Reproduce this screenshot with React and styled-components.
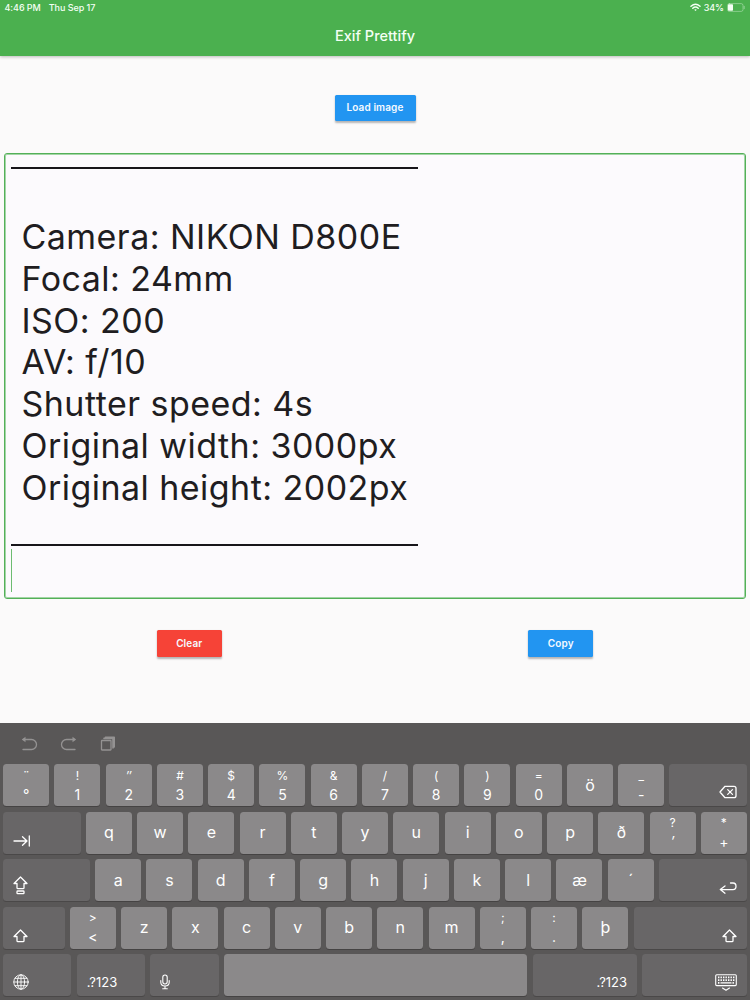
import React from "react";
import styled, { createGlobalStyle } from "styled-components";

const GlobalStyle = createGlobalStyle`
  * {
    box-sizing: border-box;
  }

  body {
    margin: 0;
    background: #fbfafa;
    font-family: Inter, "Liberation Sans", sans-serif;
  }
`;

const Screen = styled.div`
  display: flex;
  flex-direction: column;
  width: 750px;
  height: 1000px;
  overflow: hidden;
  background: #fbfafa;
`;

const Header = styled.header`
  flex: none;
  height: 56px;
  background: #4bb04f;
  color: #f4fff4;
  box-shadow: 0 1px 3px rgba(0, 0, 0, 0.25);
`;

const StatusBar = styled.div`
  display: flex;
  align-items: center;
  height: 15px;
  padding: 0 5px 0 4.5px;
  font-size: 9px;
  font-weight: 500;
  letter-spacing: -0.05px;
`;

const StatusDate = styled.span`
  margin-left: 8px;
`;

const StatusRight = styled.div`
  display: flex;
  align-items: center;
  gap: 3px;
  margin-left: auto;
`;

const AppTitle = styled.h1`
  margin: 0;
  font-size: 14.5px;
  line-height: 41px;
  font-weight: 500;
  letter-spacing: 0;
  text-align: center;
`;

const LoadRow = styled.div`
  display: flex;
  justify-content: center;
  padding: 38.5px 0 32px;
`;

const Button = styled.button`
  width: ${props => props.$width}px;
  height: 26.5px;
  padding: 0 0 1px;
  border: none;
  border-radius: 1.5px;
  background: ${props => props.$color};
  color: #f5faff;
  font-family: inherit;
  font-size: 10px;
  font-weight: 600;
  letter-spacing: 0.1px;
  box-shadow: 0 1.5px 2px rgba(0, 0, 0, 0.28);
`;

const Field = styled.div`
  flex: none;
  height: 446px;
  margin: 0 4px;
  padding: 13px 6px 0;
  border: 1px solid #53b058;
  border-radius: 3px;
  background: #fcfafd;
  box-shadow: inset 0 0 0 1px rgba(76, 175, 80, 0.5);
  color: #1f1d21;
`;

const Rule = styled.div`
  width: 407px;
  height: 2px;
  background: #17151a;
`;

const Lines = styled.div`
  padding: 47px 0 35.5px 10.5px;
  font-size: 34px;
  line-height: 41.75px;
  letter-spacing: 0.46px;
  white-space: nowrap;
`;

const Caret = styled.div`
  width: 1px;
  height: 43px;
  margin-top: 3px;
  background: #6dbb71;
`;

const Actions = styled.div`
  display: grid;
  grid-template-columns: 371.5px 371.5px;
  justify-items: center;
  padding: 31px 0 0 3.5px;
  flex: 1;
`;

const Keyboard = styled.div`
  flex: none;
  height: 277px;
  background: #595757;
  color: #fff;
`;

const Tools = styled.div`
  display: flex;
  align-items: center;
  gap: 22px;
  height: 41px;
  padding-left: 20px;
  color: #949292;
`;

const KeyRow = styled.div`
  display: flex;
  gap: 5.25px;
  height: 42px;
  margin-bottom: 5.6px;
  padding: 0 3.2px;
`;

const Key = styled.div`
  display: flex;
  flex: none;
  flex-direction: column;
  align-items: center;
  justify-content: center;
  width: ${props => props.$width || 46}px;
  border-radius: 3.5px;
  background: #8b898a;
  box-shadow: 0 1px 0.5px #454343;
  font-size: 16px;
  line-height: 19px;
`;

const Upper = styled.span`
  font-size: 12px;
  line-height: 18px;
  font-style: ${props => (props.$slanted ? "italic" : "normal")};
`;

const Lower = styled.span`
  font-size: 14px;
  line-height: 19px;
  font-style: ${props => (props.$slanted ? "italic" : "normal")};
`;

const DarkKey = styled.div`
  display: flex;
  flex: ${props => (props.$width ? "none" : 1)};
  align-items: flex-end;
  justify-content: ${props => (props.$right ? "flex-end" : "flex-start")};
  width: ${props => props.$width}px;
  padding: 0 10px 5px;
  border-radius: 3.5px;
  background: #686667;
  box-shadow: 0 1px 0.5px #4a4848;
  font-size: 13px;
  line-height: 18px;
`;

const Svg = styled.svg`
  display: block;
  fill: none;
  stroke: currentColor;
  stroke-width: ${props => props.$stroke || 1.3};
  stroke-linecap: round;
  stroke-linejoin: round;
`;

const WifiIcon = () => (
  <Svg width="11" height="9" viewBox="0 0 11 9" $stroke={1.5}>
    <path d="M1 3.2Q5.5-.8 10 3.2M2.8 5.2Q5.5 2.8 8.2 5.2" />
    <path d="M4.2 6.8Q5.5 5.8 6.8 6.8L5.5 8Z" fill="currentColor" stroke="none" />
  </Svg>
);

const BatteryIcon = () => (
  <Svg width="18" height="9" viewBox="0 0 18 9" $stroke={0.6}>
    <rect x=".5" y=".6" width="15.5" height="7.8" rx="1.8" opacity=".6" />
    <rect x="1" y="1.2" width="5" height="6.6" rx=".8" fill="currentColor" stroke="none" />
    <path d="M17.2 3.3v2.4" opacity=".7" />
  </Svg>
);

const UndoIcon = () => (
  <Svg width="18" height="16" viewBox="0 0 18 16">
    <path d="M3 3.5h8.5a4.9 4.9 0 0 1 0 10H3" />
    <path d="M5.5.8 1.8 3.5l3.7 2.7Z" fill="currentColor" stroke="none" />
  </Svg>
);

const RedoIcon = () => (
  <Svg width="18" height="16" viewBox="0 0 18 16">
    <path d="M14.5 3.5H6.5a4.9 4.9 0 0 0 0 10H15" />
    <path d="m12.5.8 3.7 2.7-3.7 2.7Z" fill="currentColor" stroke="none" />
  </Svg>
);

const PasteIcon = () => (
  <Svg width="16" height="16" viewBox="0 0 16 16">
    <rect x="1.5" y="4.5" width="9.5" height="9.5" rx=".5" />
    <path d="M4 2.4h9V12M5.5 1.3h8.7V11" strokeWidth="1.6" />
  </Svg>
);

const TabIcon = () => (
  <Svg width="18" height="15" viewBox="0 0 18 15">
    <path d="M1 7h13M9.5 2.8 14 7l-4.5 4.2M16.3 2v10" />
  </Svg>
);

const BackspaceIcon = () => (
  <Svg width="18" height="16" viewBox="0 0 18 16">
    <path d="M6 1.3h9q2 0 2 2v7.4q0 2-2 2H6L1 7Z" />
    <path d="m8.7 4.6 4.8 4.8m0-4.8L8.7 9.4" />
  </Svg>
);

const ReturnIcon = () => (
  <Svg width="18" height="14" viewBox="0 0 18 14">
    <path d="M11.5 1H14q3 0 3 3.3t-3 3.3H1.5M6 4 1.3 7.6 6 11.2" />
  </Svg>
);

const ShiftIcon = ({ lock }) => (
  <Svg width="15" height={lock ? 20 : 15} viewBox={`0 0 15 ${lock ? 20 : 15}`}>
    <path d="M7.5 1 1 7.5h3v4.2q0 1 1 1h5q1 0 1-1V7.5h3Z" />
    {lock && <rect x="4" y="15" width="7" height="2.6" rx=".7" />}
  </Svg>
);

const GlobeIcon = () => (
  <Svg width="16" height="17" viewBox="0 0 16 17" $stroke={0.9}>
    <circle cx="8" cy="8" r="7.2" />
    <ellipse cx="8" cy="8" rx="3.6" ry="7.2" />
    <path d="M8 .8v14.4M.8 8h14.4M2 4.3h12M2 11.7h12" />
  </Svg>
);

const MicIcon = () => (
  <Svg width="10" height="17" viewBox="0 0 10 17" $stroke={1.1}>
    <rect x="2.8" y="1" width="4.4" height="9" rx="2.2" />
    <path d="M.8 6.5v1.8Q.8 12 5 12t4.2-3.7V6.5M5 12v2.8M2.7 14.8h4.6" />
  </Svg>
);

const HideIcon = () => (
  <Svg width="22" height="17" viewBox="0 0 22 17" $stroke={1.1}>
    <rect x=".7" y=".8" width="20.6" height="10.8" rx="1" />
    <path
      d="M3 3.4h16.5M3 6.1h16.5M3 8.9h1.5M17.5 8.9h2"
      strokeDasharray="1.4 1.1"
      strokeLinecap="butt"
      strokeWidth="1.6"
    />
    <path d="M6 8.9h10" strokeWidth="1.4" />
    <path d="M7.5 14 11 16.2l3.5-2.2" />
  </Svg>
);

const exif = [
  "Camera: NIKON D800E",
  "Focal: 24mm",
  "ISO: 200",
  "AV: f/10",
  "Shutter speed: 4s",
  "Original width: 3000px",
  "Original height: 2002px"
];

// A pair is a key with an upper and a lower symbol
const numberKeys = [
  ["¨", "°"],
  ["!", "1"],
  ["″", "2"],
  ["#", "3"],
  ["$", "4"],
  ["%", "5"],
  ["&", "6"],
  ["/", "7"],
  ["(", "8"],
  [")", "9"],
  ["=", "0"],
  "ö",
  ["_", "-"]
];
const topKeys = [..."qwertyuiopð", ["?", "′"], ["*", "+"]];
const homeKeys = [..."asdfghjklæ", "´"];
const bottomKeys = [[">", "<"], ..."zxcvbnm", [";", ","], [":", "."], "þ"];

const renderKeys = keys =>
  keys.map((key, i) => (
    <Key key={i}>
      {Array.isArray(key) ? (
        <>
          <Upper $slanted={key[0] === "″"}>{key[0]}</Upper>
          <Lower $slanted={key[1] === "′"}>{key[1]}</Lower>
        </>
      ) : (
        key
      )}
    </Key>
  ));

function App() {
  return (
    <Screen>
      <GlobalStyle />
      <Header>
        <StatusBar>
          <span>4:46 PM</span>
          <StatusDate>Thu Sep 17</StatusDate>
          <StatusRight>
            <WifiIcon />
            <span>34%</span>
            <BatteryIcon />
          </StatusRight>
        </StatusBar>
        <AppTitle>Exif Prettify</AppTitle>
      </Header>
      <LoadRow>
        <Button $width={81} $color="#2295f1">
          Load image
        </Button>
      </LoadRow>
      <Field>
        <Rule />
        <Lines>
          {exif.map(line => (
            <div key={line}>{line}</div>
          ))}
        </Lines>
        <Rule />
        <Caret />
      </Field>
      <Actions>
        <Button $width={65} $color="#f64337">
          Clear
        </Button>
        <Button $width={65} $color="#2295f1">
          Copy
        </Button>
      </Actions>
      <Keyboard>
        <Tools>
          <UndoIcon />
          <RedoIcon />
          <PasteIcon />
        </Tools>
        <KeyRow>
          {renderKeys(numberKeys)}
          <DarkKey $right>
            <BackspaceIcon />
          </DarkKey>
        </KeyRow>
        <KeyRow>
          <DarkKey>
            <TabIcon />
          </DarkKey>
          {renderKeys(topKeys)}
        </KeyRow>
        <KeyRow>
          <DarkKey $width={86.8}>
            <ShiftIcon lock />
          </DarkKey>
          {renderKeys(homeKeys)}
          <DarkKey $right>
            <ReturnIcon />
          </DarkKey>
        </KeyRow>
        <KeyRow>
          <DarkKey $width={61.4}>
            <ShiftIcon />
          </DarkKey>
          {renderKeys(bottomKeys)}
          <DarkKey $right>
            <ShiftIcon />
          </DarkKey>
        </KeyRow>
        <KeyRow>
          <DarkKey $width={68.3}>
            <GlobeIcon />
          </DarkKey>
          <DarkKey $width={68.3}>.?123</DarkKey>
          <DarkKey $width={68.3}>
            <MicIcon />
          </DarkKey>
          <Key $width={303.5} />
          <DarkKey $width={104.5} $right>
            .?123
          </DarkKey>
          <DarkKey $right>
            <HideIcon />
          </DarkKey>
        </KeyRow>
      </Keyboard>
    </Screen>
  );
}

export default App;
